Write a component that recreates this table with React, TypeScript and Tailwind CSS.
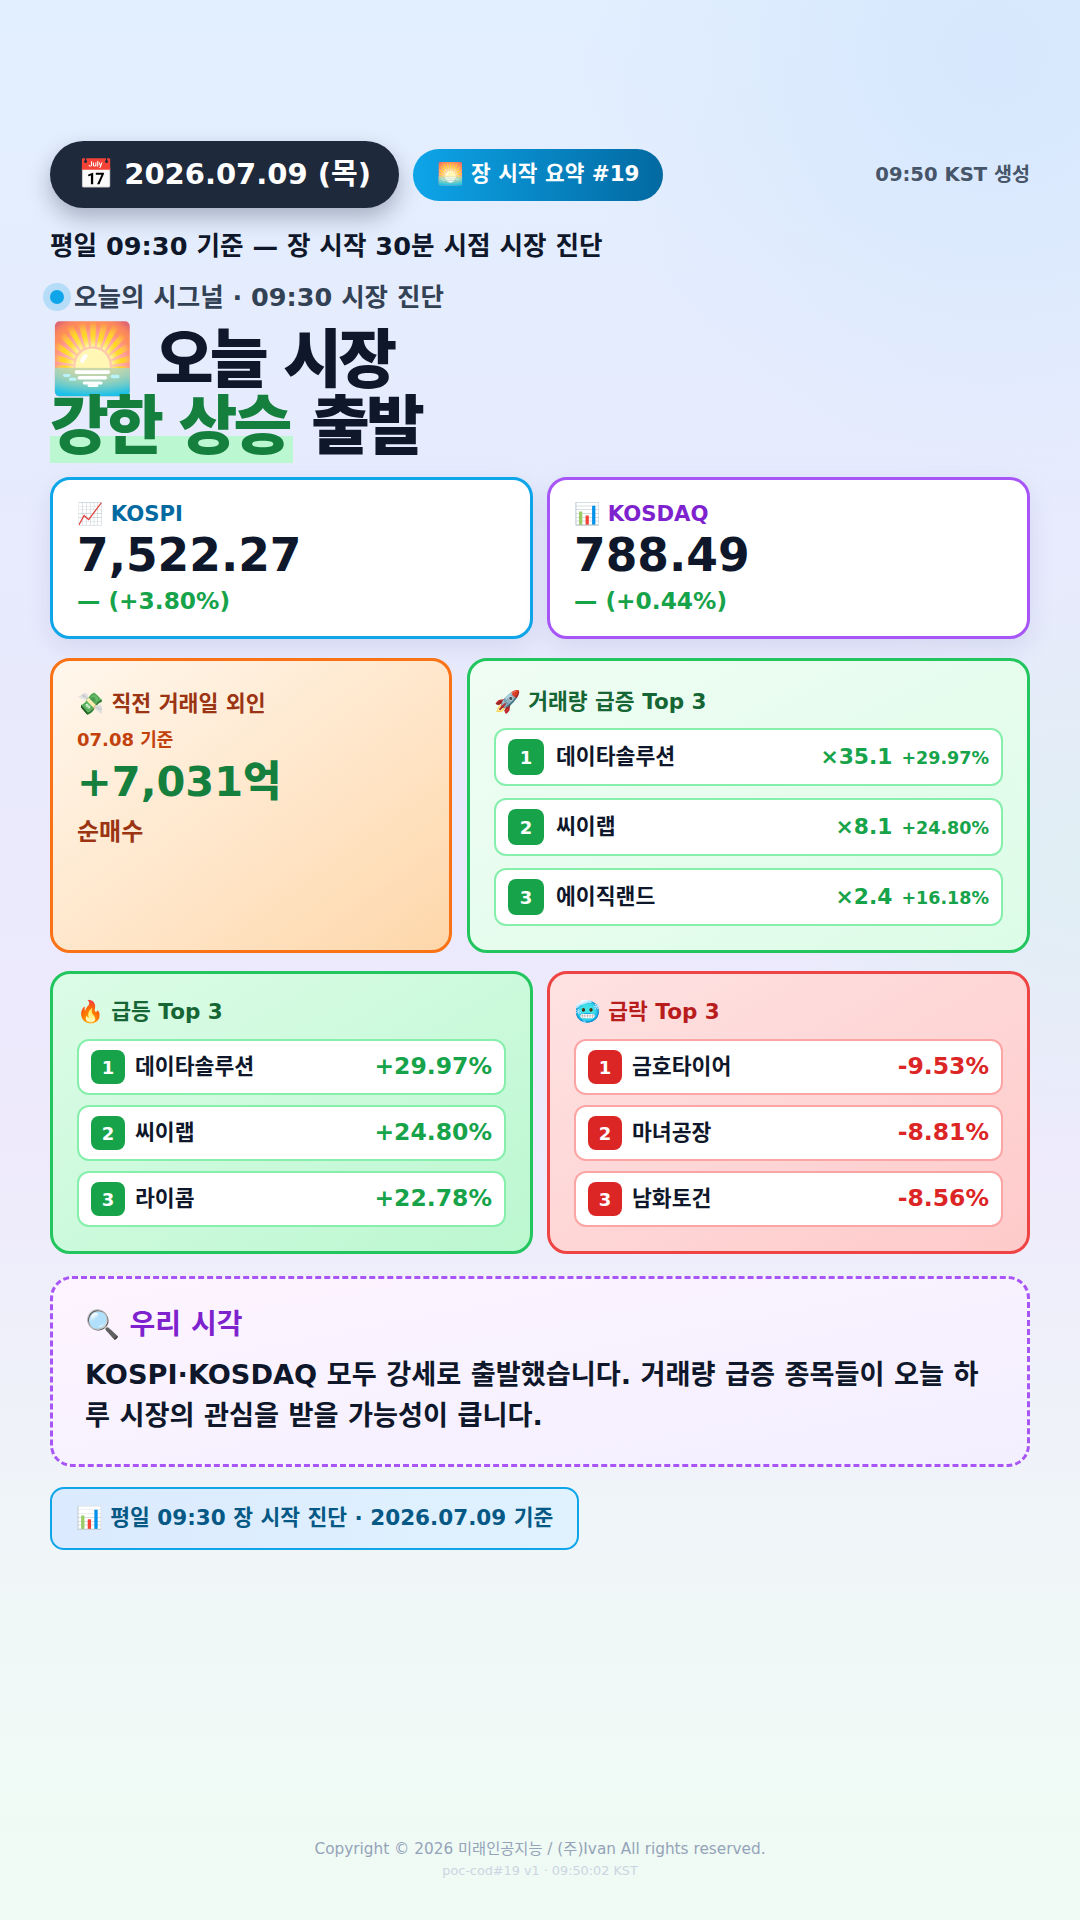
import React from 'react';

type Row = { rank: number; name: string; ratio?: string; change: string };

const volumeRows: Row[] = [
    { rank: 1, name: '데이타솔루션', ratio: '×35.1', change: '+29.97%' },
    { rank: 2, name: '씨이랩', ratio: '×8.1', change: '+24.80%' },
    { rank: 3, name: '에이직랜드', ratio: '×2.4', change: '+16.18%' },
];

const gainers: Row[] = [
    { rank: 1, name: '데이타솔루션', change: '+29.97%' },
    { rank: 2, name: '씨이랩', change: '+24.80%' },
    { rank: 3, name: '라이콤', change: '+22.78%' },
];

const losers: Row[] = [
    { rank: 1, name: '금호타이어', change: '-9.53%' },
    { rank: 2, name: '마녀공장', change: '-8.81%' },
    { rank: 3, name: '남화토건', change: '-8.56%' },
];

// full class strings per theme so tailwind can pick them up
const themes = {
    up: {
        card: 'border-[#22c55e] bg-gradient-to-br from-[#dcfce7] to-[#bbf7d0]',
        title: 'text-[#166534]',
        row: 'border-[#86efac]',
        badge: 'bg-[#16a34a]',
        value: 'text-[#16a34a]',
    },
    down: {
        card: 'border-[#ef4444] bg-gradient-to-br from-[#fee2e2] to-[#fecaca]',
        title: 'text-[#b91c1c]',
        row: 'border-[#fca5a5]',
        badge: 'bg-[#dc2626]',
        value: 'text-[#dc2626]',
    },
};

function IndexCard({ icon, label, value, change, border, labelColor }: {
    icon: string; label: string; value: string; change: string; border: string; labelColor: string;
}) {
    return (
        <div className={`rounded-[20px] border-[3px] bg-white px-6 py-5 shadow-[0_8px_24px_rgba(99,102,180,0.14)] ${border}`}>
            <div className={`text-[21.2px] leading-[28px] font-bold ${labelColor}`}>{icon} {label}</div>
            <div className="mt-[2px] text-[45.5px] leading-[51px] font-extrabold text-[#0f172a]">{value}</div>
            <div className="mt-1 text-[23.3px] leading-[31px] font-bold text-[#16a34a]">{change}</div>
        </div>
    );
}

function MoverCard({ icon, title, rows, tone }: { icon: string; title: string; rows: Row[]; tone: 'up' | 'down' }) {
    const t = themes[tone];
    return (
        <div className={`rounded-[20px] border-[3px] p-6 ${t.card}`}>
            <div className={`text-[21.5px] leading-[28px] font-bold ${t.title}`}>{icon} {title}</div>
            <div className="mt-[13px] flex flex-col gap-[10px]">
                {rows.map((r) => (
                    <div key={r.rank} className={`flex h-[56px] items-center gap-[10px] rounded-xl border-2 bg-white px-3 ${t.row}`}>
                        <span className={`flex h-[34px] w-[34px] items-center justify-center rounded-lg text-[18px] font-bold text-white ${t.badge}`}>
                            {r.rank}
                        </span>
                        <span className="text-[21.6px] font-bold text-[#0f172a]">{r.name}</span>
                        <span className={`ml-auto text-[23.5px] font-bold ${t.value}`}>{r.change}</span>
                    </div>
                ))}
            </div>
        </div>
    );
}

export default function App() {
    return (
        <div className="flex min-h-[1920px] w-full flex-col bg-[radial-gradient(circle_at_92%_3%,#d6e7fd_0,transparent_20%),radial-gradient(circle_at_100%_45%,#e0eff4_0,transparent_20%),linear-gradient(180deg,#e2effe_0%,#e8eafc_35%,#eeeafc_60%,#f0f8f7_85%,#effbf4_100%)] px-[50px] pt-[141px] font-['DejaVu_Sans','Noto_Sans_CJK_KR','Noto_Color_Emoji',sans-serif] text-[#0f172a]">
            {/* header */}
            <header className="flex items-center gap-[14px]">
                <div className="flex h-[67px] items-center rounded-full bg-[#1e293b] px-7 text-[29px] font-bold text-white shadow-[0_10px_22px_rgba(15,23,42,0.28)]">
                    📅 2026.07.09 (목)
                </div>
                <div className="flex h-[52px] items-center rounded-full bg-gradient-to-r from-[#0ea5e9] to-[#0369a1] px-6 text-[21.4px] font-bold text-white">
                    🌅 장 시작 요약 #19
                </div>
                <div className="ml-auto text-[19.6px] font-bold text-[#475569]">09:50 KST 생성</div>
            </header>

            <p className="mt-5 text-[25.6px] leading-[36px] font-bold text-[#0f172a]">
                평일 09:30 기준 — 장 시작 30분 시점 시장 진단
            </p>

            <div className="mt-4 flex items-center gap-[10px] text-[25.5px] leading-[34px] font-semibold text-[#334155]">
                <span className="h-[14px] w-[14px] shrink-0 rounded-full bg-[#0ea5e9] shadow-[0_0_0_7px_rgba(14,165,233,0.22)]" />
                <span>오늘의 시그널 · 09:30 시장 진단</span>
            </div>

            <h1 className="mt-[12px] text-[64px] leading-[66px] font-extrabold tracking-[-0.06em] text-[#0f172a]">
                <span className="mr-[20px] text-[68px] tracking-normal">🌅</span>오늘 시장
                <br />
                <span className="bg-[linear-gradient(transparent_64%,#bbf7d0_64%)] pr-1 text-[#15803d]">강한 상승</span> 출발
            </h1>

            {/* index cards */}
            <div className="mt-[18px] grid grid-cols-2 gap-[14px]">
                <IndexCard icon="📈" label="KOSPI" value="7,522.27" change="— (+3.80%)" border="border-[#0ea5e9]" labelColor="text-[#0369a1]" />
                <IndexCard icon="📊" label="KOSDAQ" value="788.49" change="— (+0.44%)" border="border-[#a855f7]" labelColor="text-[#7e22ce]" />
            </div>

            {/* foreign + volume */}
            <div className="mt-[19px] grid grid-cols-[402px_1fr] gap-[15px]">
                <div className="rounded-[20px] border-[3px] border-[#f97316] bg-gradient-to-br from-[#fff7ed] to-[#fed7aa] p-6">
                    <div className="mt-1 text-[21.6px] leading-[30px] font-bold text-[#9a3412]">💸 직전 거래일 외인</div>
                    <div className="mt-[8px] text-[18px] leading-[26px] font-bold text-[#c2410c]">07.08 기준</div>
                    <div className="mt-[5px] text-[41.5px] leading-[48px] font-black text-[#15803d]">+7,031억</div>
                    <div className="mt-[11px] text-[24px] leading-[30px] font-bold text-[#9a3412]">순매수</div>
                </div>
                <div className="rounded-[20px] border-[3px] border-[#22c55e] bg-gradient-to-br from-[#f0fdf4] to-[#dcfce7] p-6">
                    <div className="mt-[2px] text-[21.5px] leading-[30px] font-bold text-[#166534]">🚀 거래량 급증 Top 3</div>
                    <div className="mt-[11px] flex flex-col gap-3">
                        {volumeRows.map((r) => (
                            <div key={r.rank} className="flex h-[58px] items-center gap-3 rounded-xl border-2 border-[#86efac] bg-white px-3">
                                <span className="flex h-9 w-9 items-center justify-center rounded-lg bg-[#16a34a] text-[18px] font-bold text-white">
                                    {r.rank}
                                </span>
                                <span className="text-[21.6px] font-bold text-[#0f172a]">{r.name}</span>
                                <span className="ml-auto flex items-baseline gap-[9px] font-bold text-[#16a34a]">
                                    <span className="text-[21.8px]">{r.ratio}</span>
                                    <span className="text-[17.5px]">{r.change}</span>
                                </span>
                            </div>
                        ))}
                    </div>
                </div>
            </div>

            {/* movers */}
            <div className="mt-[18px] grid grid-cols-2 gap-[14px]">
                <MoverCard icon="🔥" title="급등 Top 3" rows={gainers} tone="up" />
                <MoverCard icon="🥶" title="급락 Top 3" rows={losers} tone="down" />
            </div>

            {/* our view */}
            <div className="mt-[22px] rounded-[22px] border-[3px] border-dashed border-[#a855f7] bg-gradient-to-br from-[#fdf4ff] to-[#f3efff] px-8 pt-7 pb-7">
                <div className="text-[28px] leading-[36px] font-bold text-[#7e22ce]">🔍 우리 시각</div>
                <p className="mt-[11px] text-[27.2px] leading-[41px] font-semibold text-[#0f172a]">
                    <strong className="font-extrabold">KOSPI·KOSDAQ</strong> 모두 강세로 출발했습니다. 거래량 급증 종목들이 오늘 하루 시장의 관심을 받을 가능성이 큽니다.
                </p>
            </div>

            <div className="mt-5 flex h-[63px] items-center self-start rounded-[14px] border-2 border-[#0ea5e9] bg-gradient-to-r from-[#dbeafe] to-[#e0f2fe] px-6 text-[21.5px] font-bold text-[#075985]">
                📊 평일 09:30 장 시작 진단 · 2026.07.09 기준
            </div>

            <footer className="mt-auto pb-10 text-center">
                <div className="text-[15.3px] leading-[20px] text-[#94a3b8]">Copyright © 2026 미래인공지능 / (주)Ivan All rights reserved.</div>
                <div className="mt-[3px] text-[12.8px] leading-[18px] text-[#cbd5e1]">poc-cod#19 v1 · 09:50:02 KST</div>
            </footer>
        </div>
    );
}
